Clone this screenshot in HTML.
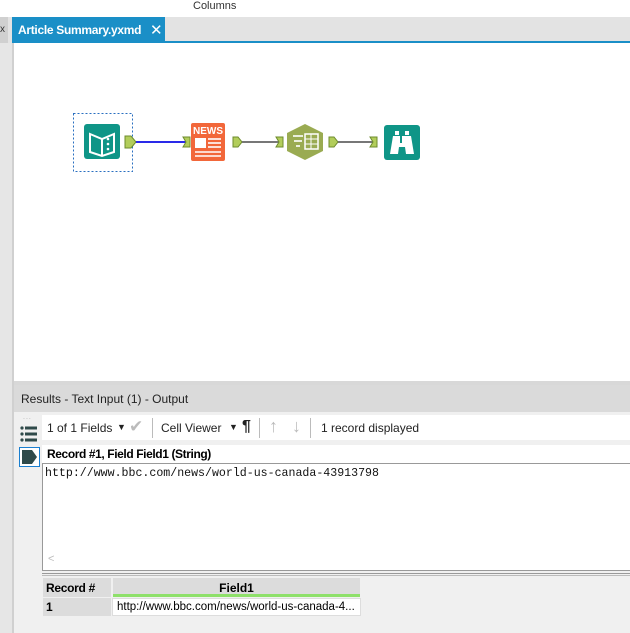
<!DOCTYPE html>
<html><head><style>
*{margin:0;padding:0;box-sizing:border-box}
body{width:630px;height:633px;overflow:hidden;background:#f0f0f0;font-family:"Liberation Sans",sans-serif;position:relative}
.a{position:absolute}
</style></head><body>
<div class="a" style="left:0;top:0;width:630px;height:17px;background:#fff"></div>
<div class="a" style="left:193px;top:0;font-size:11px;color:#333">Columns</div>
<div class="a" style="left:0;top:17px;width:630px;height:26px;background:#e3e3e3"></div>
<div class="a" style="left:0;top:17px;width:8px;height:26px;background:#d0d0d0"></div>
<div class="a" style="left:0;top:24px;font-size:10px;color:#333">x</div>
<div class="a" style="left:12px;top:17px;width:153px;height:25px;background:#1a8fc7;color:#fff;font-size:12px;font-weight:bold;padding:6px 0 0 6px;letter-spacing:-0.3px">Article Summary.yxmd<span style="position:absolute;left:138px;top:4px;font-weight:normal;font-size:15px">✕</span></div>
<div class="a" style="left:12px;top:41px;width:618px;height:2px;background:#1a8fc7"></div>
<div class="a" style="left:0;top:43px;width:12px;height:590px;background:#e6e6e6"></div>
<div class="a" style="left:12px;top:43px;width:2px;height:590px;background:#d0d0d0"></div>
<div class="a" style="left:14px;top:43px;width:616px;height:338px;background:#fff"></div>
<svg class="a" style="left:14px;top:43px" width="616" height="338">
<rect x="59.5" y="70.5" width="59" height="58" fill="none" stroke="#2a6fc0" stroke-dasharray="2,2"/>
<rect x="70" y="81" width="36" height="35" rx="3" fill="#0f9587"/>
<path d="M76 91 L88 96 L100 91 L100 109 L88 113 L76 109Z" fill="none" stroke="#fff" stroke-width="2"/>
<line x1="88" y1="96" x2="88" y2="112" stroke="#fff" stroke-width="2"/>
<circle cx="94" cy="96" r="1.3" fill="#fff"/><circle cx="94" cy="101" r="1.3" fill="#fff"/><circle cx="94" cy="106" r="1.3" fill="#fff"/>
<path d="M111 93 L117 93 L122 99 L117 105 L111 105Z" fill="#b2cd5b" stroke="#6d8b2c"/>
<line x1="122" y1="99" x2="172" y2="99" stroke="#2a2ae8" stroke-width="2"/>
<path d="M169 94 L176 94 L176 104 L169 104 L172 99Z" fill="#b2cd5b" stroke="#6d8b2c"/>
<rect x="177" y="80" width="34" height="38" rx="2" fill="#f2673a"/>
<text x="194" y="91" font-size="10" font-weight="bold" fill="#fff" text-anchor="middle" font-family="Liberation Sans">NEWS</text>
<rect x="181" y="95" width="11" height="10" fill="#fff"/>
<g stroke="#fff" stroke-width="1.6"><line x1="194" y1="96" x2="207" y2="96"/><line x1="194" y1="100" x2="207" y2="100"/><line x1="194" y1="104" x2="207" y2="104"/><line x1="181" y1="109" x2="207" y2="109"/><line x1="181" y1="113" x2="207" y2="113"/></g>
<path d="M219 94 L224 94 L228 99 L224 104 L219 104Z" fill="#b2cd5b" stroke="#6d8b2c"/>
<line x1="228" y1="99" x2="266" y2="99" stroke="#777" stroke-width="2"/>
<path d="M262 94 L269 94 L269 104 L262 104 L265 99Z" fill="#b2cd5b" stroke="#6d8b2c"/>
<path d="M291 81 L309 90 L309 108 L291 117 L273 108 L273 90Z" fill="#9aab52"/>
<g stroke="#fff" stroke-width="1.6"><line x1="279" y1="93" x2="289" y2="93"/><line x1="280" y1="98" x2="288" y2="98"/><line x1="282" y1="103" x2="286" y2="103"/></g>
<rect x="291" y="91" width="13" height="15" fill="none" stroke="#fff" stroke-width="1.5"/>
<line x1="291" y1="96" x2="304" y2="96" stroke="#fff"/><line x1="291" y1="101" x2="304" y2="101" stroke="#fff"/><line x1="297" y1="91" x2="297" y2="106" stroke="#fff"/>
<path d="M315 94 L320 94 L324 99 L320 104 L315 104Z" fill="#b2cd5b" stroke="#6d8b2c"/>
<line x1="324" y1="99" x2="360" y2="99" stroke="#777" stroke-width="2"/>
<path d="M356 94 L363 94 L363 104 L356 104 L359 99Z" fill="#b2cd5b" stroke="#6d8b2c"/>
<rect x="370" y="82" width="36" height="35" rx="3" fill="#0f9587"/>
<g fill="#fff"><rect x="381" y="88" width="4" height="4"/><rect x="391" y="88" width="4" height="4"/>
<path d="M379 93 L386 93 L386 100 L388 100 L388 93 L397 93 L400 111 L392 111 L391 104 L385 104 L384 111 L376 111Z"/></g>
</svg>
<div class="a" style="left:14px;top:381px;width:616px;height:4px;background:#d8d8d8"></div>
<div class="a" style="left:14px;top:385px;width:616px;height:27px;background:#dadada;font-size:12px;color:#222;padding:7px 0 0 7px">Results - Text Input (1) - Output</div>
<div class="a" style="left:23px;top:414px;font-size:7px;color:#aaa;letter-spacing:1px">...</div>
<svg class="a" style="left:20px;top:426px" width="18" height="16"><g fill="#2f4a4a"><circle cx="2" cy="2" r="1.6"/><rect x="5" y="0.5" width="12" height="3"/><circle cx="2" cy="8" r="1.6"/><rect x="5" y="6.5" width="12" height="3"/><circle cx="2" cy="14" r="1.6"/><rect x="5" y="12.5" width="12" height="3"/></g></svg>
<div class="a" style="left:19px;top:447px;width:21px;height:20px;border:1px solid #1a7fd0;background:#fff"></div>
<svg class="a" style="left:21px;top:449px" width="18" height="16"><path d="M1 1 L11 1 L16 8 L11 15 L1 15Z" fill="#2f4a4a"/></svg>
<div class="a" style="left:42px;top:415px;width:588px;height:25px;background:#fff;font-size:12px;color:#222">
<span class="a" style="left:5px;top:6px">1 of 1 Fields</span>
<span class="a" style="left:75px;top:7px;font-size:9px">▼</span>
<span class="a" style="left:87px;top:2px;font-size:17px;color:#bbb">✔</span>
<div class="a" style="left:110px;top:3px;width:1px;height:20px;background:#bbb"></div>
<span class="a" style="left:119px;top:6px">Cell Viewer</span>
<span class="a" style="left:187px;top:7px;font-size:9px">▼</span>
<span class="a" style="left:200px;top:3px;font-size:16px;font-weight:bold">¶</span>
<div class="a" style="left:217px;top:3px;width:1px;height:20px;background:#bbb"></div>
<span class="a" style="left:227px;top:1px;font-size:18px;font-weight:bold;color:#bbb">↑</span>
<span class="a" style="left:250px;top:1px;font-size:18px;font-weight:bold;color:#bbb">↓</span>
<div class="a" style="left:268px;top:3px;width:1px;height:20px;background:#bbb"></div>
<span class="a" style="left:279px;top:6px">1 record displayed</span>
</div>
<div class="a" style="left:42px;top:445px;width:588px;height:18px;background:#fff;font-size:12px;font-weight:bold;padding:2px 0 0 5px;letter-spacing:-0.4px">Record #1, Field Field1 (String)</div>
<div class="a" style="left:42px;top:463px;width:588px;height:108px;background:#fff;border:1px solid #999;border-right:none"></div>
<div class="a" style="left:45px;top:467px;font-family:'Liberation Mono',monospace;font-size:11.6px;color:#111">http://www.bbc.com/news/world-us-canada-43913798</div>
<div class="a" style="left:48px;top:553px;font-size:11px;color:#bbb">&lt;</div>
<div class="a" style="left:42px;top:573px;width:588px;height:3px;border-top:1px solid #999;border-bottom:1px solid #bbb"></div>
<div class="a" style="left:43px;top:578px;width:68px;height:19px;background:#dcdcdc;font-size:12px;font-weight:bold;padding:3px 0 0 3px;letter-spacing:-0.3px">Record #</div>
<div class="a" style="left:113px;top:578px;width:247px;height:19px;background:#dcdcdc;border-bottom:3px solid #8ee06a;font-size:12px;font-weight:bold;text-align:center;padding-top:3px">Field1</div>
<div class="a" style="left:43px;top:598px;width:68px;height:18px;background:#dcdcdc;font-size:12px;font-weight:bold;padding:2px 0 0 3px">1</div>
<div class="a" style="left:112px;top:598px;width:249px;height:18px;background:#fff;border:1px solid #ddd;font-size:11.5px;padding:2px 0 0 4px;white-space:nowrap;overflow:hidden">http://www.bbc.com/news/world-us-canada-4...</div>
</body></html>
